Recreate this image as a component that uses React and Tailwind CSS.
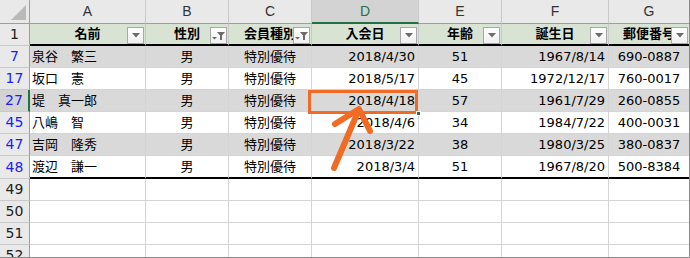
import React from "react";

const cols = ["A", "B", "C", "D", "E", "F", "G"];

const headers = [
  { label: "名前", filter: "plain" },
  { label: "性別", filter: "active" },
  { label: "会員種別", filter: "active" },
  { label: "入会日", filter: "plain" },
  { label: "年齢", filter: "plain" },
  { label: "誕生日", filter: "plain" },
  { label: "郵便番号", filter: "plain" },
];

const rows = [
  { n: 7, cells: ["泉谷　繁三", "男", "特別優待", "2018/4/30", "51", "1967/8/14", "690-0887"] },
  { n: 17, cells: ["坂口　憲", "男", "特別優待", "2018/5/17", "45", "1972/12/17", "760-0017"] },
  { n: 27, cells: ["堤　真一郎", "男", "特別優待", "2018/4/18", "57", "1961/7/29", "260-0855"] },
  { n: 45, cells: ["八嶋　智", "男", "特別優待", "2018/4/6", "34", "1984/7/22", "400-0031"] },
  { n: 47, cells: ["吉岡　隆秀", "男", "特別優待", "2018/3/22", "38", "1980/3/25", "380-0837"] },
  { n: 48, cells: ["渡辺　謙一", "男", "特別優待", "2018/3/4", "51", "1967/8/20", "500-8384"] },
];

const align = ["justify-start pl-[2px]", "justify-center", "justify-center", "justify-end pr-[3px]", "justify-center", "justify-end pr-[3px]", "justify-center"];

const FilterButton = ({ active }) => (
  <div className="absolute right-[1px] top-[3px] w-[17px] h-[17px] border border-[#a8a8a8] bg-gradient-to-b from-white to-[#f0f0f0] flex items-center justify-center">
    {active ? (
      <svg width="13" height="11" viewBox="0 0 13 11">
        <path d="M5 2h8L10 5.5V10H8V5.5Z" fill="#6b6b6b" />
        <path d="M0 7h5L2.5 9.5Z" fill="#6b6b6b" />
      </svg>
    ) : (
      <svg width="8" height="5" viewBox="0 0 8 5">
        <path d="M0 0h8L4 4.5Z" fill="#6b6b6b" />
      </svg>
    )}
  </div>
);

const RowHeader = ({ n, blue, selected, h = "h-[22px]" }) => (
  <div
    className={`${h} flex items-center justify-center border-b border-[#c9c9c9] text-[14px] ${
      selected ? "bg-[#d3d3d3] border-r-2 border-r-[#217346]" : "bg-[#e9e9e9] border-r border-r-[#9e9e9e]"
    } ${blue ? "text-[#1c1cff]" : "text-[#222]"}`}
  >
    {n}
  </div>
);

export default function App() {
  return (
    <div
      className="relative w-[690px] h-[258px] overflow-hidden bg-white border-b border-r border-[#8a8a8a] text-[13px] text-black"
      style={{ fontFamily: '"DejaVu Sans", "Noto Sans CJK JP", sans-serif' }}
    >
      <div className="grid grid-cols-[30px_116px_83px_83px_107px_83px_107px_81px]">
        {/* column letters */}
        <div className="h-[24px] relative bg-[#e9e9e9] border-r border-b border-[#9e9e9e]">
          <div className="absolute right-[3px] bottom-[3px] w-0 h-0 border-l-[15px] border-l-transparent border-b-[15px] border-b-[#b9b9b9]" />
        </div>
        {cols.map((c) => (
          <div
            key={c}
            className={`h-[24px] flex items-center justify-center border-r border-[#c9c9c9] text-[14px] ${
              c === "D" ? "bg-[#d3d3d3] border-b-2 border-b-[#217346] text-[#217346]" : "bg-[#e9e9e9] border-b border-b-[#9e9e9e] text-[#333]"
            }`}
            style={{ fontFamily: '"Liberation Sans", sans-serif' }}
          >
            {c}
          </div>
        ))}

        {/* filter header row */}
        <RowHeader n={1} />
        {headers.map((h) => (
          <div
            key={h.label}
            className="relative h-[22px] flex items-center justify-center font-bold bg-[#d9e3d4] border-r border-r-[#c9c9c9] border-b-2 border-b-black"
          >
            {h.label}
            <FilterButton active={h.filter === "active"} />
          </div>
        ))}

        {/* filtered data rows */}
        {rows.map((r, ri) => {
          const last = ri === rows.length - 1;
          const h = last ? "h-[23px]" : "h-[22px]";
          return (
            <React.Fragment key={r.n}>
              <RowHeader n={r.n} blue selected={r.n === 27} h={h} />
              {r.cells.map((v, ci) => (
                <div
                  key={ci}
                  className={`${h} flex items-center whitespace-nowrap overflow-hidden ${align[ci]} border-r border-[#d4d4d4] ${
                    ri % 2 === 0 ? "bg-[#d9d9d9]" : "bg-white"
                  } ${last ? "border-b-2 border-b-black" : "border-b border-b-[#d4d4d4]"}`}
                >
                  {v}
                </div>
              ))}
            </React.Fragment>
          );
        })}

        {/* empty rows below */}
        {[49, 50, 51, 52].map((n) => (
          <React.Fragment key={n}>
            <RowHeader n={n} />
            {cols.map((c) => (
              <div key={c} className="h-[22px] border-r border-b border-[#d4d4d4]" />
            ))}
          </React.Fragment>
        ))}
      </div>

      {/* highlight on D27 */}
      <div className="absolute left-[308px] top-[90px] w-[110px] h-[24px] border-[3px] border-[#f26b24]" />
      <div className="absolute left-[416px] top-[111px] w-[5px] h-[5px] bg-[#217346] border border-white" />

      {/* pointer arrow */}
      <svg className="absolute left-0 top-0" width="690" height="258">
        <g stroke="#f26b24" strokeWidth="6" strokeLinecap="round" strokeLinejoin="round" fill="none">
          <line x1="334" y1="168" x2="357" y2="114" />
          <polyline points="335,124 359,109 370,131" />
        </g>
      </svg>
    </div>
  );
}
